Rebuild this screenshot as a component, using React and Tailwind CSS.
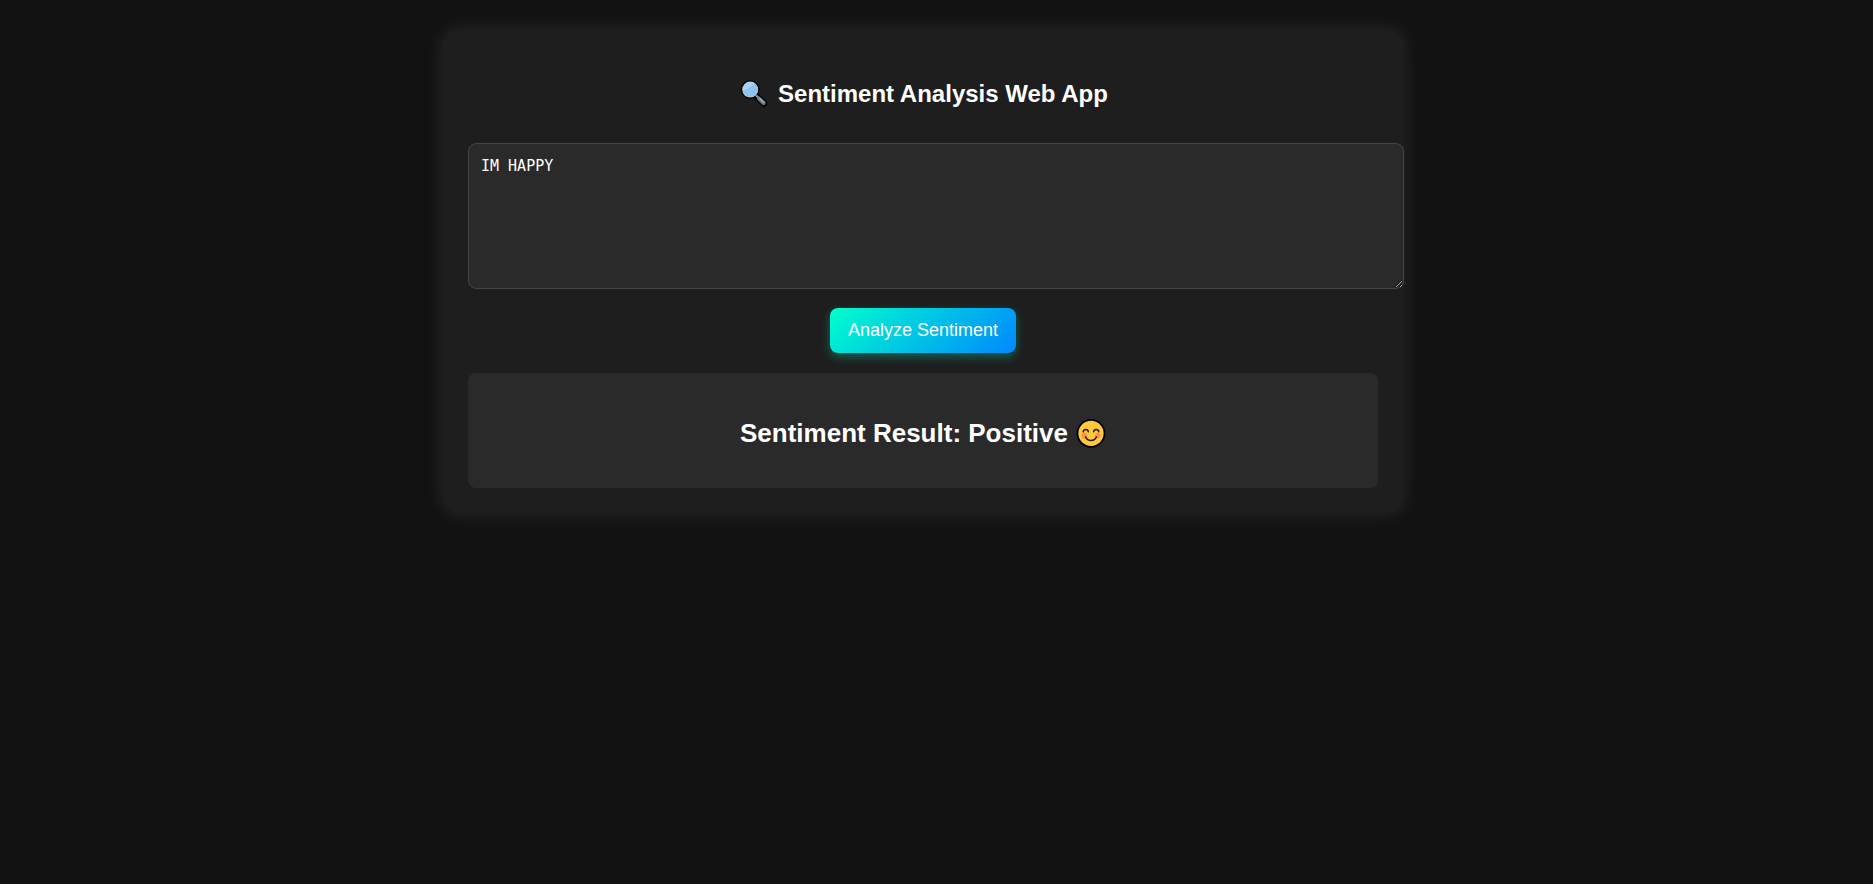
import { useState } from "react";

function MagnifierIcon() {
  return (
    <svg viewBox="0 0 28 28" className="h-7 w-7 shrink-0" aria-hidden="true">
      <path d="M17 17 L24 23.4" stroke="#000" strokeWidth="6.4" strokeLinecap="round" />
      <circle cx="10.2" cy="9.6" r="9.4" fill="#000" />
      <circle cx="10.2" cy="9.6" r="8" fill="#cdc5c0" />
      <circle cx="10.2" cy="9.6" r="7.2" fill="#8ac4f2" />
      <path d="M3.3 11.4 A7.2 7.2 0 0 1 14.4 3.7 Z" fill="#a9d3f5" />
      <path d="M16.2 15.6 L18.6 17.8" stroke="#9aa5ab" strokeWidth="2" />
      <path d="M19 18.6 L23.6 23" stroke="#6f7c83" strokeWidth="4" strokeLinecap="round" />
      <path d="M19.6 18.2 L23.8 22.2" stroke="#a3afb5" strokeWidth="1.2" strokeLinecap="round" />
    </svg>
  );
}

function SmileIcon() {
  return (
    <svg viewBox="0 0 30 30" className="h-[30px] w-[30px] shrink-0" aria-hidden="true">
      <circle cx="15" cy="14.4" r="14.4" fill="#000" />
      <circle cx="15" cy="14.4" r="12.6" fill="#ffc83d" />
      <circle cx="8.4" cy="16.8" r="2.8" fill="#ff8d58" />
      <circle cx="21.6" cy="16.8" r="2.8" fill="#ff8d58" />
      <g fill="none" stroke="#241c10" strokeWidth="1.5" strokeLinecap="round">
        <path d="M7.2 12.8 C7.6 9.6 12 9.6 12.4 12.8" />
        <path d="M17.6 12.8 C18 9.6 22.4 9.6 22.8 12.8" />
        <path d="M9.6 18 C11.6 22.6 18.4 22.6 20.4 18" />
      </g>
    </svg>
  );
}

export default function App() {
  const [text, setText] = useState("IM HAPPY");
  return (
    <div className="min-h-screen bg-[#121212] pt-[30px] pr-[27px] font-['Liberation_Sans',Arial,sans-serif] text-white">
      <main className="mx-auto max-w-[960px] rounded-[15px] bg-[#1e1e1e] p-[25px] shadow-[0_0_20px_rgba(255,255,255,0.1)]">
        <h1 className="flex items-center justify-center gap-2.5 pt-[22px] pb-8 pl-0.5 text-2xl leading-[34px] font-bold">
          <MagnifierIcon />
          Sentiment Analysis Web App
        </h1>
        <form className="text-center" onSubmit={(e) => e.preventDefault()}>
          <textarea
            aria-label="Text to analyze"
            value={text}
            onChange={(e) => setText(e.target.value)}
            className="block h-[146px] w-[calc(100%+26px)] rounded-lg border border-[#444] bg-[#2a2a2a] p-3 font-['DejaVu_Sans_Mono',monospace] text-[15px] leading-5 text-white outline-none"
          />
          <button
            type="submit"
            className="mt-[19px] mb-5 h-[45px] rounded-lg bg-[linear-gradient(135deg,#00ffcc,#0088ff)] px-[18px] pb-0.5 text-lg leading-5 text-white shadow-[0_4px_10px_rgba(0,255,204,0.3)]"
          >
            Analyze Sentiment
          </button>
        </form>
        <section className="rounded-lg bg-[#2a2a2a] px-5 pt-[45px] pb-[39px]">
          <h2 className="flex items-center justify-center gap-2 text-[26px] leading-[31px] font-bold">
            Sentiment Result: Positive
            <SmileIcon />
          </h2>
        </section>
      </main>
    </div>
  );
}
